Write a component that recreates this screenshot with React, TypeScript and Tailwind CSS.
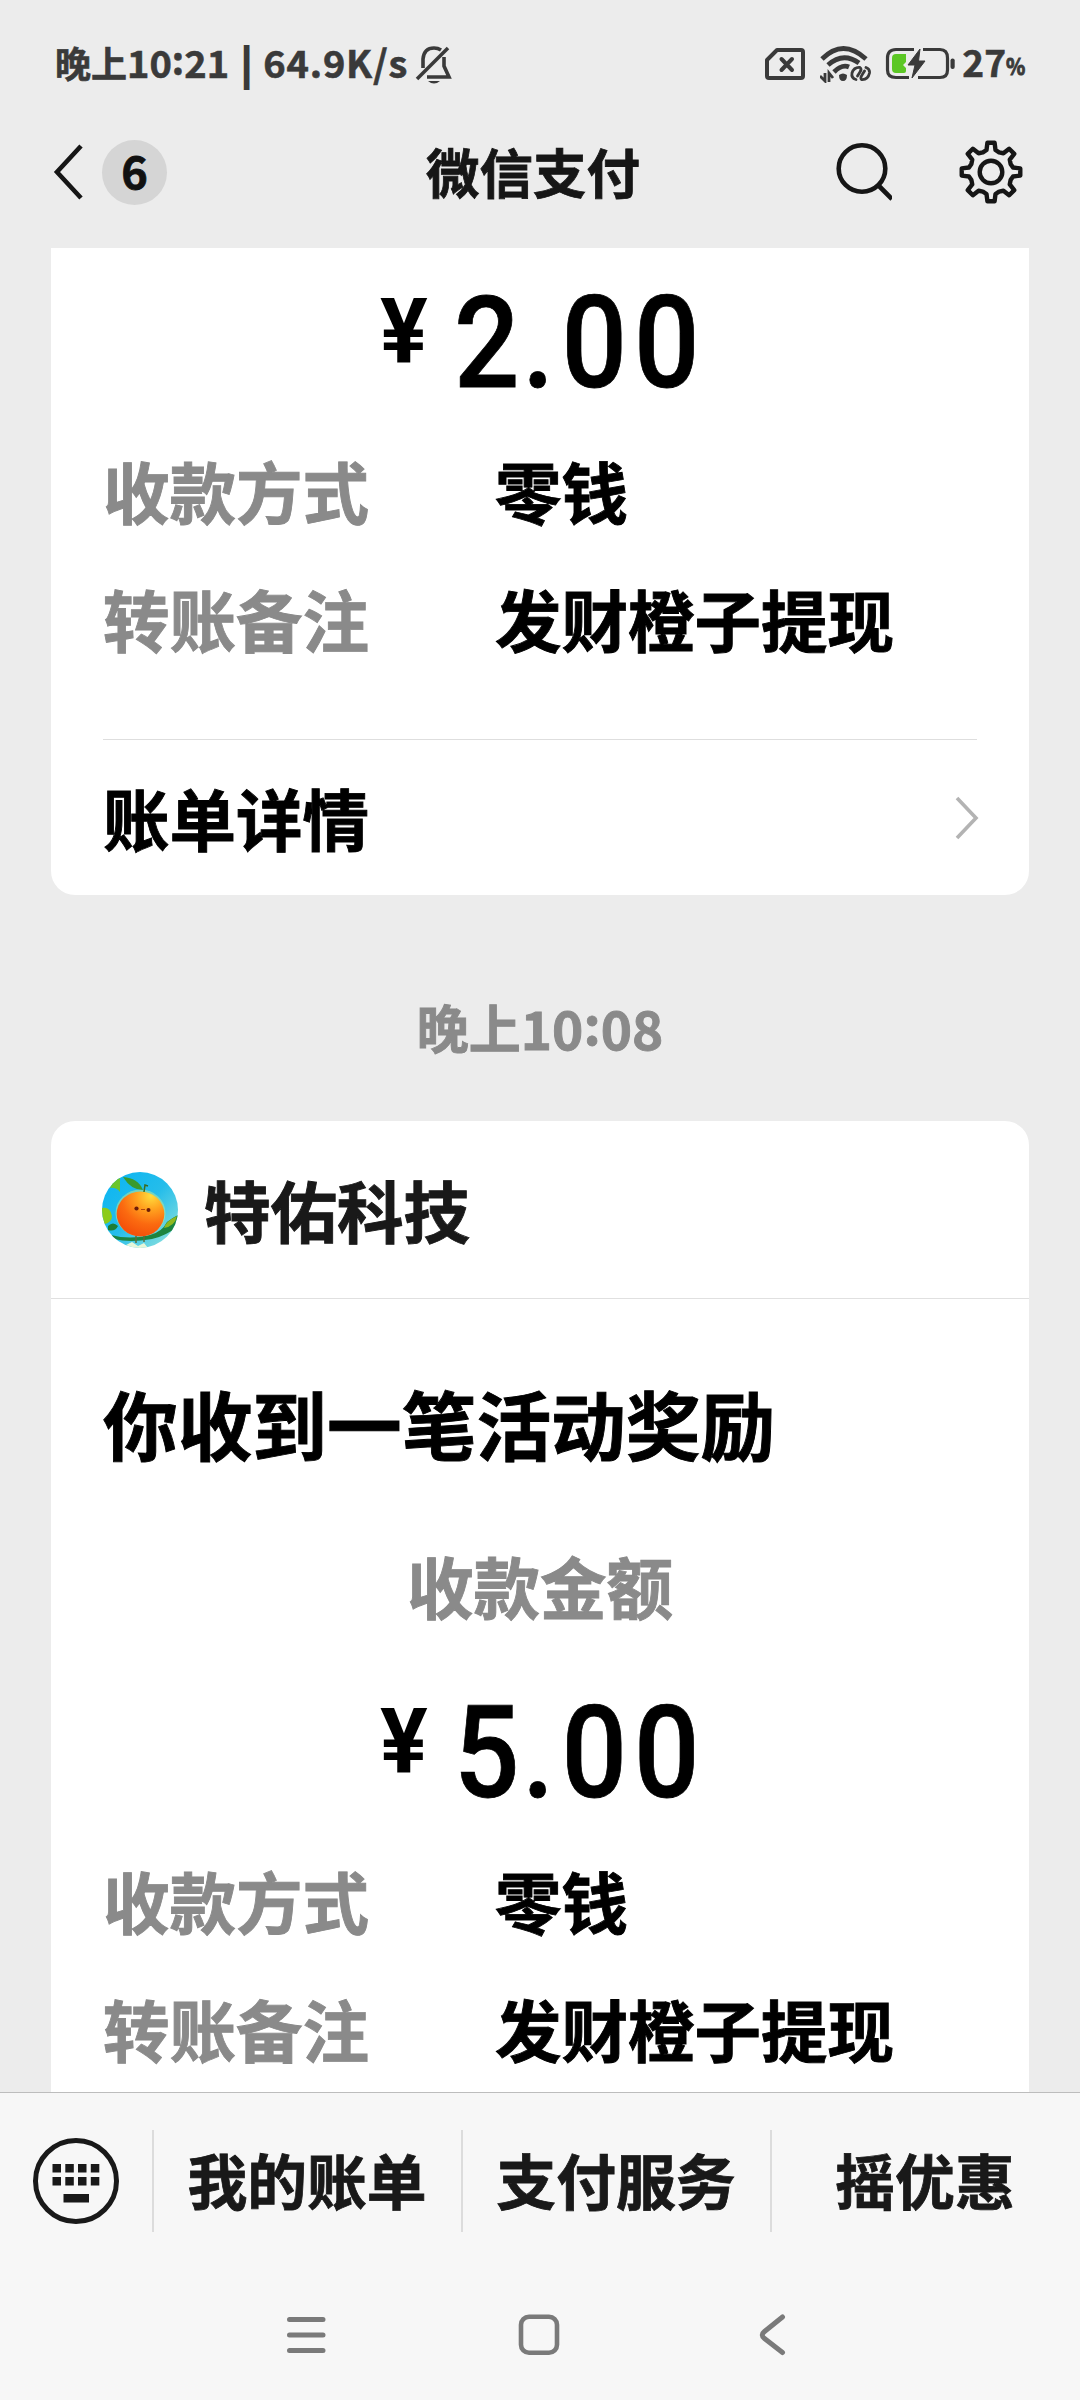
import type { ReactNode } from "react";

function GearIcon() {
  const pts: string[] = [];
  for (let i = 0; i < 8; i++) {
    const base = (i * Math.PI) / 4;
    const at = (r: number, deg: number) => {
      const a = base + (deg * Math.PI) / 180;
      return `${(33 + r * Math.sin(a)).toFixed(2)} ${(33 - r * Math.cos(a)).toFixed(2)}`;
    };
    pts.push(at(22.5, -11.5), at(29.5, -7), at(29.5, 7), at(22.5, 11.5), at(21.2, 22.5));
  }
  return (
    <svg width="66" height="66" viewBox="0 0 66 66" fill="none" stroke="#161616" strokeWidth="4.4" strokeLinejoin="round">
      <polygon points={pts.join(" ")} />
      <circle cx="33" cy="33" r="11.3" />
    </svg>
  );
}

function Avatar() {
  return (
    <svg width="76" height="76" viewBox="0 0 76 76" className="block">
      <defs>
        <clipPath id="round"><circle cx="38" cy="38" r="38" /></clipPath>
        <linearGradient id="sky" x1="0" y1="0" x2="1" y2="1">
          <stop offset="0" stopColor="#08b4f4" />
          <stop offset="0.5" stopColor="#25bdea" />
          <stop offset="1" stopColor="#9be6dc" />
        </linearGradient>
        <radialGradient id="peel" cx="0.72" cy="0.1" r="0.9">
          <stop offset="0" stopColor="#ffdc3c" />
          <stop offset="0.35" stopColor="#ffa01e" />
          <stop offset="0.7" stopColor="#fb6a10" />
          <stop offset="1" stopColor="#f4520a" />
        </radialGradient>
      </defs>
      <g clipPath="url(#round)">
        <rect width="76" height="76" fill="url(#sky)" />
        <path d="M8 16 Q12 6 18 6 L18 20 Q14 15 8 16Z" fill="#6cc52c" />
        <path d="M0 36 Q8 34 10 44 Q10 50 3 52 L0 50Z" fill="#8ccb1a" />
        <path d="M6 54 Q11 49 16 54 Q13 60 6 58Z" fill="#1e7d34" />
        <path d="M9 63 Q28 68 48 63 Q60 60 65 50 Q70 46 76 43 L76 54 Q64 64 50 67 Q28 71 12 67Z" fill="#1c8440" />
        <path d="M62 56 Q64 49 75 44 Q73 54 62 56Z" fill="#8fb81e" />
        <ellipse cx="38.500" cy="41" rx="25" ry="23.500" fill="#b6e89a" opacity="0.55" />
        <ellipse cx="38.500" cy="42" rx="23.800" ry="22.500" fill="url(#peel)" />
        <path d="M21 5 Q36 6 41 18 Q29 18 21 5Z" fill="#3a9a2c" />
        <path d="M42 20 L43 13 L46 14" stroke="#3b6a20" strokeWidth="1.500" fill="none" />
        <circle cx="34.500" cy="36.500" r="2.100" fill="#6d1c08" />
        <circle cx="46.500" cy="38" r="2" fill="#6d1c08" />
        <path d="M39 37.500 H43" stroke="#b3480c" strokeWidth="1" />
        <path d="M34 64 V71 M42 64 V70" stroke="#5d6b3a" strokeWidth="1.500" />
        <path d="M24 73 L30 70 L36 74 L42 71 L46 76 H24Z" fill="#e6f6d8" />
      </g>
    </svg>
  );
}

function Amount({ yuan, cents }: { yuan: string; cents: string }) {
  return (
    <div className="flex h-[94px] items-start pl-[329px] font-[Roboto,sans-serif] text-black [-webkit-text-stroke:0px]">
      <span className="mt-[4px] block w-[74px] origin-left scale-x-[0.99] text-[90px] leading-[64px] font-bold">¥</span>
      <span className="-mt-px block origin-left scale-x-[0.9] text-[128px] leading-[94px] font-medium tracking-[8px] [-webkit-text-stroke:0.800px]">
        {yuan}
        <span className="-ml-[5px]">.</span>
        {cents}
      </span>
    </div>
  );
}

function Row({ label, value }: { label: string; value: string }) {
  return (
    <div className="flex h-[128px] items-center pl-[52px] text-[66.500px] leading-none">
      <span className="w-[392px] text-[#8a8a8a]">{label}</span>
      <span className="text-black">{value}</span>
    </div>
  );
}

function Tab({ children }: { children: ReactNode }) {
  return (
    <div className="flex h-[102px] w-[309px] shrink-0 items-center justify-center border-l-2 border-[#dcdcdc] pr-px pb-[2px] text-[59.800px] leading-none text-[#191919]">
      {children}
    </div>
  );
}

export default function App() {
  return (
    <div className="flex h-[2400px] w-[1080px] flex-col overflow-hidden bg-[#ececec] font-['Noto_Sans_CJK_SC',sans-serif] font-bold">
      <header className="h-[248px] shrink-0">
        <div className="flex h-[128px] items-center pr-[54px] pl-[55px] text-[#3a3a3a] [-webkit-text-stroke:0.6px]">
          <div className="flex items-center pb-[5px] leading-none whitespace-pre">
            <span className="text-[36px] leading-none">晚上</span>
            <span className="text-[38px] leading-none">10<span className="relative -top-[3px]">:</span>21</span>
            <span className="ml-[12px] text-[38px] leading-none [-webkit-text-stroke:2px]">|</span>
            <span className="ml-[11px] text-[38px] leading-none tracking-[0.800px]">64.9K/s</span>
          </div>
          <svg className="ml-[7px]" width="38" height="40" viewBox="0 0 38 40" fill="none" stroke="#3a3a3a" strokeWidth="3.600">
            <path d="M8 24 V15 Q9 4 19 4 Q23 4 26 6" />
            <path d="M2 35 L33 4" />
            <path d="M29 13 V22 L34 33 H12" />
            <path d="M13 37 H25 Q19 42 13 37Z" fill="#3a3a3a" stroke="none" />
          </svg>
          <div className="ml-auto flex items-center">
            <svg width="40" height="34" viewBox="0 0 40 34" fill="none" stroke="#3a3a3a" strokeWidth="4" strokeLinejoin="round">
              <path d="M12 3 H36 Q38 3 38 5 V29 Q38 31 36 31 H4 Q2 31 2 29 V13Z" />
              <path d="M16.500 12 L27 23 M27 12 L16.500 23" strokeLinecap="round" />
            </svg>
            <svg className="ml-[15px]" width="51" height="38" viewBox="0 0 51 38" fill="none" stroke="#3a3a3a" strokeWidth="4.800">
              <path d="M2 14 Q23 -7 46 14" />
              <path d="M8 20 Q23 6.500 39 18" />
              <path d="M14 27 Q22 19 29 22" />
              <path d="M19 30 Q23 27 27 30 Q27 36 23 36 Q19 36 19 30Z" fill="#3a3a3a" stroke="none" />
              <path d="M5 28 V36 L0 31 M9 37 V28 L13 33" strokeWidth="2.800" />
              <path d="M36 34.500 Q31 33 32 28 Q34 22 40 22.500 Q42 24 40 27 L37.500 31" strokeWidth="2.800" strokeLinecap="round" />
              <path d="M46 22.500 Q50 24 49.500 28 Q48 35 41.500 34.500 Q40 33 42 30 L44.500 26" strokeWidth="2.800" strokeLinecap="round" />
            </svg>
            <svg className="ml-[14px]" width="71" height="36" viewBox="0 0 71 36" fill="none" stroke="#3a3a3a" strokeWidth="3.200">
              <path d="M29 3.500 H11 Q2.500 3.500 2.500 12 V24 Q2.500 31.500 11 31.500 H24" />
              <path d="M38 3.500 H55 Q62.500 3.500 62.500 12 V24 Q62.500 31.500 55 31.500 H33" />
              <rect x="65.500" y="12.500" width="4.200" height="10.500" rx="2" fill="#3a3a3a" stroke="none" />
              <path d="M11 8 H21 V16 L18 19 L21 22 V25 Q21 27 19 27 H11 Q7 27 7 23 V12 Q7 8 11 8Z" fill="#5cc725" stroke="none" />
              <path d="M35 3 L23 19 H30 L27 32 L40 15 H33.500Z" fill="#3a3a3a" stroke="#3a3a3a" strokeWidth="1" />
            </svg>
            <span className="ml-[6px] pb-[5px] text-[37px] leading-none">27</span>
            <span className="mt-[2px] w-[20px] origin-left scale-x-[0.87] text-[23px] leading-none [-webkit-text-stroke:1px]">%</span>
          </div>
        </div>
        <div className="flex h-[88px] items-center pl-[53px]">
          <svg width="30" height="58" viewBox="0 0 30 58" fill="none" stroke="#161616" strokeWidth="4.600">
            <path d="M28 3 L4 29 L28 55" />
          </svg>
          <div className="ml-[19px] flex size-[65px] items-center justify-center rounded-full bg-[#d5d5d5] pb-[5px] text-[45px] leading-none text-[#111] [-webkit-text-stroke:0.800px]">6</div>
          <h1 className="ml-[259px] w-[401px] pb-[3px] text-[53.500px] leading-none text-[#161616] [-webkit-text-stroke:0.800px]">微信支付</h1>
          <svg width="60" height="62" viewBox="0 0 60 62" fill="none" stroke="#161616" strokeWidth="4.600" className="ml-[5px]">
            <circle cx="30" cy="27.500" r="23.300" />
            <path d="M46 44 L60 58" />
          </svg>
          <div className="ml-[66px]"><GearIcon /></div>
        </div>
      </header>

      <main className="h-[1844px] shrink-0 overflow-hidden px-[51px] [-webkit-text-stroke:0.900px]">
        <section className="h-[647px] rounded-b-[24px] bg-white pt-[49px]">
          <Amount yuan="2" cents="00" />
          <div className="mt-[35px]">
            <Row label="收款方式" value="零钱" />
            <Row label="转账备注" value="发财橙子提现" />
          </div>
          <div className="mx-[52px] mt-[57px] flex h-[156px] items-center justify-between border-t border-[#dedede] text-[66.500px] leading-none text-black">
            <span className="pb-px">账单详情</span>
            <svg className="-mr-[2px]" width="24" height="46" viewBox="0 0 24 46" fill="none" stroke="#b3b3b3" strokeWidth="3.600">
              <path d="M2 3 L21 23 L2 43" />
            </svg>
          </div>
        </section>
        <div className="flex h-[226px] items-center justify-center pt-[38px] leading-none text-[#8a8a8a]">
          <span className="text-[52px] leading-none">晚上</span>
          <span className="text-[53px] leading-none">10<span className="relative -top-[5px]">:</span>08</span>
        </div>
        <section className="h-[1000px] rounded-t-[24px] bg-white">
          <div className="flex h-[178px] items-center border-b border-[#e0e0e0] pl-[51px]">
            <Avatar />
            <span className="ml-[26px] text-[66.500px] leading-none text-[#191919]">特佑科技</span>
          </div>
          <h2 className="mt-[87px] pl-[52px] text-[74.700px] leading-[74px] text-black">你收到一笔活动奖励</h2>
          <div className="mt-[89px] text-center text-[66.500px] leading-[72px] text-[#8a8a8a]">收款金额</div>
          <div className="mt-[86px]"><Amount yuan="5" cents="00" /></div>
          <div className="mt-[35px]">
            <Row label="收款方式" value="零钱" />
            <Row label="转账备注" value="发财橙子提现" />
          </div>
        </section>
      </main>

      <footer className="h-[308px] shrink-0 border-t border-[#bdbdbd] bg-[#f7f7f7] [-webkit-text-stroke:0.800px]">
        <div className="flex h-[176px] items-center">
          <div className="flex w-[152px] shrink-0 justify-center">
            <svg width="88" height="88" viewBox="0 0 88 88" fill="#191919">
              <circle cx="44" cy="44" r="40.500" fill="none" stroke="#191919" strokeWidth="5" />
              {[20.5, 33.3, 46, 58.8].map((x) => (
                <g key={x}>
                  <rect x={x} y="27" width="8.500" height="8.500" />
                  <rect x={x} y="40" width="8.500" height="8.500" />
                </g>
              ))}
              <rect x="31.500" y="57" width="25.500" height="8.500" />
            </svg>
          </div>
          <Tab>我的账单</Tab>
          <Tab>支付服务</Tab>
          <Tab>摇优惠</Tab>
        </div>
        <nav className="flex h-[131px] items-start pt-[43px] pl-[285px]">
          <svg width="44" height="46" viewBox="0 0 44 46" stroke="#7a7a7a" strokeWidth="5" strokeLinecap="round">
            <path d="M4.500 7.500 H38 M4.500 23 H38 M4.500 38.500 H38" />
          </svg>
          <svg className="ml-[188px]" width="44" height="46" viewBox="0 0 44 46" fill="none" stroke="#7a7a7a" strokeWidth="4.600">
            <rect x="4" y="4.800" width="36" height="36" rx="8" />
          </svg>
          <svg className="ml-[196px]" width="32" height="46" viewBox="0 0 32 46" fill="none" stroke="#7a7a7a" strokeWidth="5" strokeLinecap="round" strokeLinejoin="round">
            <path d="M25.500 5 L7.500 19.500 Q3 23 7.500 26.500 L25.500 40.500" />
          </svg>
        </nav>
      </footer>
    </div>
  );
}
